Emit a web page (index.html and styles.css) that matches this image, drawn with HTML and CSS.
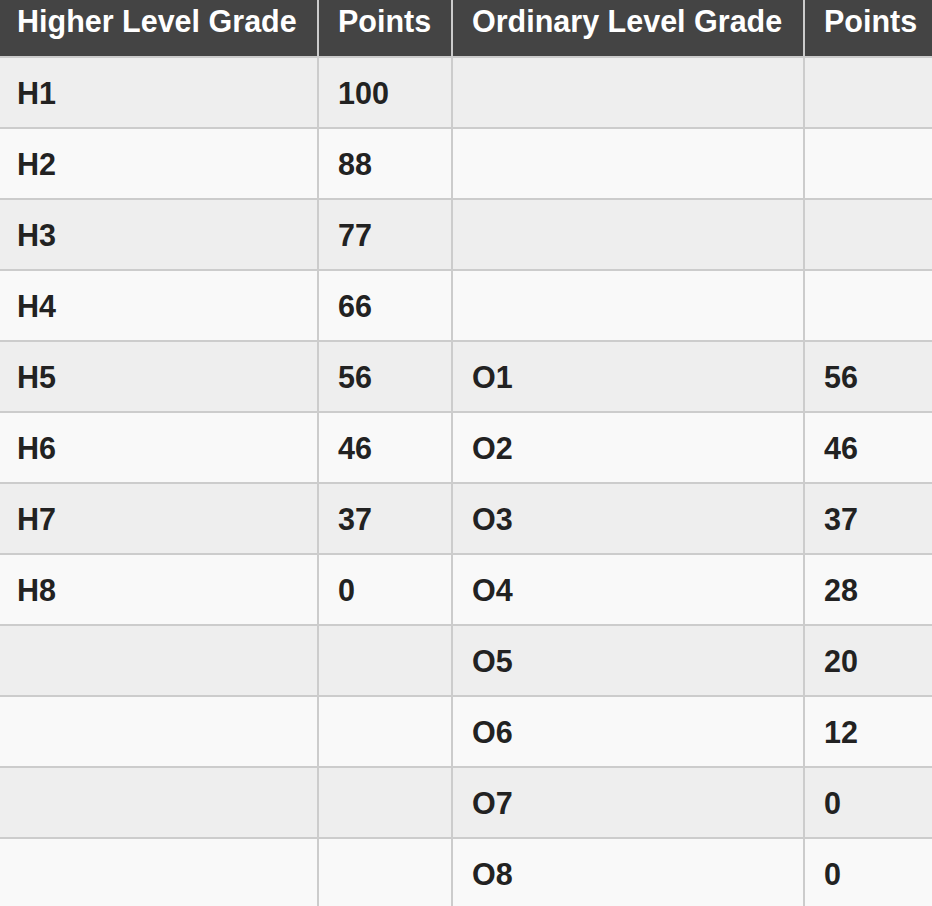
FILE: index.html
```html
<!DOCTYPE html>
<html>
<head>
<meta charset="utf-8">
<link rel="stylesheet" href="styles.css">
</head>
<body>
<table class="grades">
  <colgroup>
    <col class="c1"><col class="c2"><col class="c3"><col class="c4">
  </colgroup>
  <thead>
    <tr><th>Higher Level Grade</th><th>Points</th><th>Ordinary Level Grade</th><th>Points</th></tr>
  </thead>
  <tbody>
    <tr><td>H1</td><td>100</td><td></td><td></td></tr>
    <tr><td>H2</td><td>88</td><td></td><td></td></tr>
    <tr><td>H3</td><td>77</td><td></td><td></td></tr>
    <tr><td>H4</td><td>66</td><td></td><td></td></tr>
    <tr><td>H5</td><td>56</td><td>O1</td><td>56</td></tr>
    <tr><td>H6</td><td>46</td><td>O2</td><td>46</td></tr>
    <tr><td>H7</td><td>37</td><td>O3</td><td>37</td></tr>
    <tr><td>H8</td><td>0</td><td>O4</td><td>28</td></tr>
    <tr><td></td><td></td><td>O5</td><td>20</td></tr>
    <tr><td></td><td></td><td>O6</td><td>12</td></tr>
    <tr><td></td><td></td><td>O7</td><td>0</td></tr>
    <tr><td></td><td></td><td>O8</td><td>0</td></tr>
  </tbody>
</table>
</body>
</html>
```
FILE: styles.css
```css
html, body {
  margin: 0;
  padding: 0;
  background: #f9f9f9;
}
body {
  font-family: "Liberation Sans", Arial, sans-serif;
  overflow: hidden;
}
.grades {
  border-collapse: separate;
  border-spacing: 0;
  table-layout: fixed;
  width: 932px;
  font-size: 30.5px;
  font-weight: bold;
}
.c1 { width: 319px; }
.c2 { width: 134px; }
.c3 { width: 352px; }
.c4 { width: 127px; }
.grades th,
.grades td {
  padding: 0 18px 0 19px;
  text-align: left;
  border-right: 2px solid #cccccc;
  border-bottom: 2px solid #cccccc;
  white-space: nowrap;
}
.grades th:first-child,
.grades td:first-child {
  padding-left: 17px;
}
.grades th:last-child,
.grades td:last-child {
  border-right: none;
}
.grades th {
  background: #444444;
  color: #ffffff;
  height: 56px;
  box-sizing: border-box;
  line-height: 34px;
  padding-top: 4px;
  padding-bottom: 18px;
  vertical-align: top;
}
.grades td {
  color: #222222;
  height: 69px;
  line-height: 34px;
  vertical-align: middle;
}
.grades tbody tr:nth-child(odd) td { background: #eeeeee; }
.grades tbody tr:nth-child(even) td { background: #f9f9f9; }
```
